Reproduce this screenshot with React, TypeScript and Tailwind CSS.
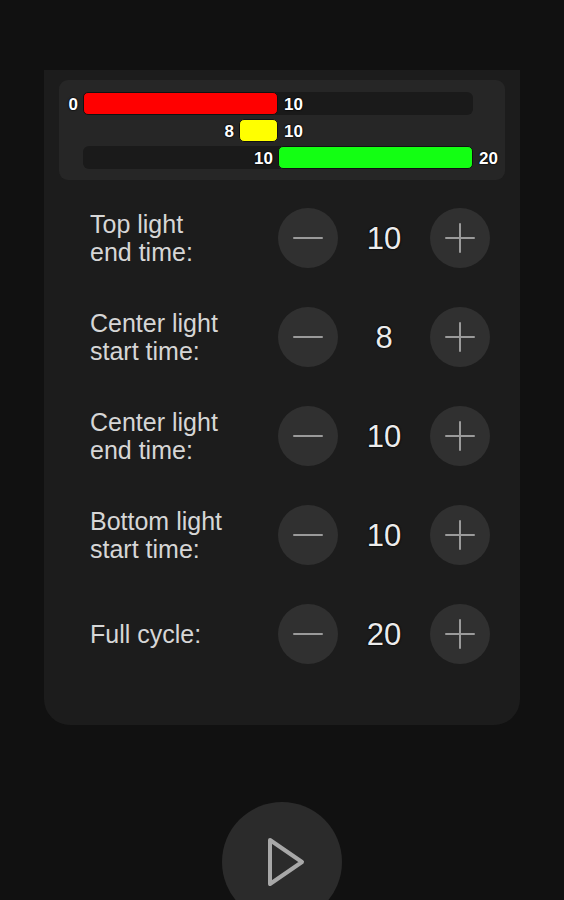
import React from "react";

const font = { fontFamily: '"Liberation Sans", Arial, sans-serif' };

type Bar = { start: number; end: number; color: string; track: boolean };

const TOTAL = 20;
const bars: Bar[] = [
  { start: 0, end: 10, color: "#ff0000", track: true },
  { start: 8, end: 10, color: "#ffff00", track: false },
  { start: 10, end: 20, color: "#13ff13", track: true },
];

const controls = [
  { label: ["Top light", "end time:"], value: 10 },
  { label: ["Center light", "start time:"], value: 8 },
  { label: ["Center light", "end time:"], value: 10 },
  { label: ["Bottom light", "start time:"], value: 10 },
  { label: ["Full cycle:"], value: 20 },
];

const outline = "[text-shadow:0_0_2px_#000,0_0_1px_#000,0_0_1px_#000]";

function TimelineRow({ bar }: { bar: Bar }) {
  const left = (bar.start / TOTAL) * 100;
  const width = ((bar.end - bar.start) / TOTAL) * 100;
  return (
    <div
      className={`relative ml-[24px] h-[23px] w-[390px] rounded-[6px] ${
        bar.track ? "bg-[#1a1a1a]" : ""
      }`}
    >
      <div
        className="absolute top-0 h-full"
        style={{ left: `${left}%`, width: `${width}%` }}
      >
        <div
          className="h-full w-full rounded-[5px] border border-[#111]"
          style={{ backgroundColor: bar.color }}
        />
        <span
          className={`absolute right-full top-1/2 mr-[5px] -translate-y-1/2 text-[17px] font-bold leading-none text-white ${outline}`}
        >
          {bar.start}
        </span>
        <span
          className={`absolute left-full top-1/2 ml-[6px] -translate-y-1/2 text-[17px] font-bold leading-none text-white ${outline}`}
        >
          {bar.end}
        </span>
      </div>
    </div>
  );
}

function RoundButton({ kind }: { kind: "minus" | "plus" }) {
  return (
    <button className="flex h-[60px] w-[60px] shrink-0 items-center justify-center rounded-full bg-[#303030]">
      <svg width="32" height="32" viewBox="0 0 32 32">
        <line x1="2" y1="16" x2="30" y2="16" stroke="#9a9a9a" strokeWidth="2" strokeLinecap="round" />
        {kind === "plus" && (
          <line x1="16" y1="2" x2="16" y2="30" stroke="#9a9a9a" strokeWidth="2" strokeLinecap="round" />
        )}
      </svg>
    </button>
  );
}

export default function App() {
  return (
    <div className="h-[900px] w-full overflow-hidden bg-[#111111]" style={font}>
      <div className="flex flex-col items-center pt-[70px]">
        <div className="w-[476px] rounded-b-[26px] bg-[#1c1c1c] px-[15px] pt-[10px] pb-[61px]">
          <div className="flex flex-col gap-[4px] rounded-[9px] bg-[#262626] pt-[12px] pb-[11px]">
            {bars.map((b, i) => (
              <TimelineRow key={i} bar={b} />
            ))}
          </div>
          <div className="flex flex-col gap-[39px] pt-[28px]">
            {controls.map((c, i) => (
              <div key={i} className="flex h-[60px] items-center pl-[31px]">
                <div className="w-[188px] text-[25px] leading-[28px] text-[#d6d6d6]">
                  {c.label.map((l, j) => (
                    <div key={j}>{l}</div>
                  ))}
                </div>
                <RoundButton kind="minus" />
                <div
                  className={`w-[92px] text-center text-[31px] leading-none text-[#ececec] ${outline}`}
                >
                  {c.value}
                </div>
                <RoundButton kind="plus" />
              </div>
            ))}
          </div>
        </div>
        <button className="mt-[77px] flex h-[120px] w-[120px] items-center justify-center rounded-full bg-[#2b2b2b]">
          <svg width="40" height="54" viewBox="0 0 40 54" className="ml-[8px]">
            <path
              d="M4 5 L36 27 L4 49 Z"
              fill="none"
              stroke="#a8a8a8"
              strokeWidth="4"
              strokeLinejoin="round"
            />
          </svg>
        </button>
      </div>
    </div>
  );
}
